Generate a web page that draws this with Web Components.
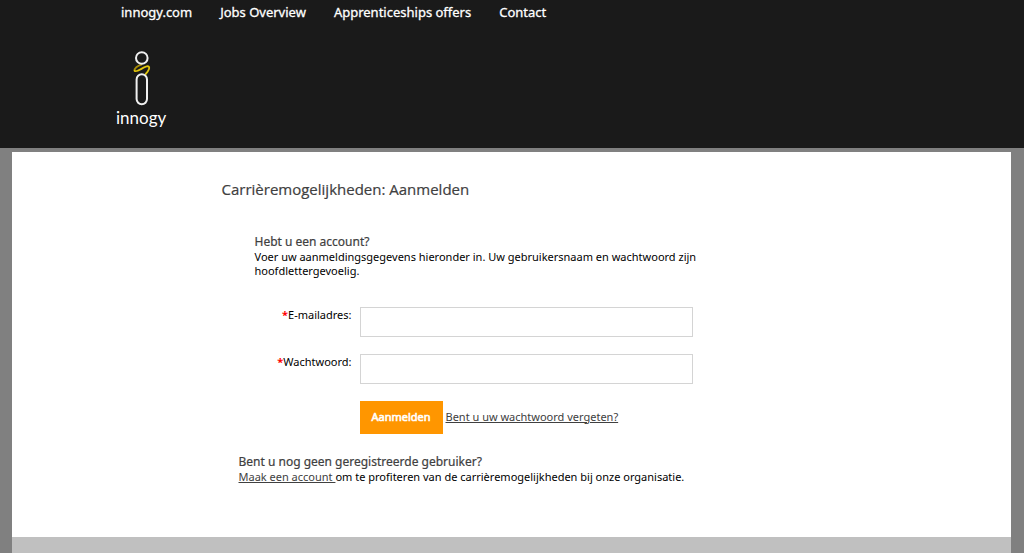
<!DOCTYPE html>
<html lang="nl">
<head>
<meta charset="utf-8">
<title>Carrièremogelijkheden: Aanmelden</title>
<style>
html { min-height: 100%; background: #808080; }
body { margin: 0; font: 11px/14px "Noto Sans", "Open Sans", sans-serif; color: #000; }
</style>
</head>
<body>
<career-page></career-page>
<script>
const define = (name, html) => customElements.define(name, class extends HTMLElement {
  constructor() {
    super();
    const t = document.createElement('template');
    t.innerHTML = html;
    this.attachShadow({ mode: 'open' }).append(t.content.cloneNode(true));
  }
});

define('brand-logo', `
<style>
:host { display: block; }
a { display: inline-flex; flex-direction: column; align-items: center; color: #fff; text-decoration: none; font: 17px/20px Lato, sans-serif; }
svg { display: block; }
</style>
<a href="#">
  <svg width="20" height="58" viewBox="0 0 20 58" fill="none" stroke-linecap="round" aria-hidden="true">
    <path d="M10.5 14.6C6.5 15.8 2.9 18.5 3.6 20.8" stroke="#a58b08" stroke-width="1.8"/>
    <path d="M3.6 20.8C5.5 23.2 13 16.2 16.7 16.2C19.7 16.6 17.8 20.9 14.7 24" stroke="#e2c60d" stroke-width="1.8"/>
    <circle cx="10.8" cy="8" r="5.8" stroke="#f0f0f0" stroke-width="2"/>
    <rect x="5.6" y="24.2" width="10.4" height="30" rx="5.2" stroke="#f0f0f0" stroke-width="2"/>
  </svg>
  <span>innogy</span>
</a>`);

define('site-header', `
<style>
:host { display: block; background: #1a1a1a; }
.inner { box-sizing: border-box; max-width: 800px; min-height: 148px; margin: 0 auto; padding: 0 4px; }
nav { display: flex; gap: 28px; padding: 2px 5px 0; }
nav a { color: #fff; text-decoration: none; font-size: 13px; line-height: 20px; -webkit-text-stroke: .3px; }
brand-logo { margin-top: 28px; }
</style>
<header class="inner">
  <nav><a href="#">innogy.com</a><a href="#">Jobs Overview</a><a href="#">Apprenticeships offers</a><a href="#">Contact</a></nav>
  <brand-logo></brand-logo>
</header>`);

define('login-form', `
<style>
:host { display: block; }
form { display: grid; grid-template-columns: 97px minmax(0, 333px); column-gap: 8px; row-gap: 17px; }
label { text-align: right; padding-top: 1px; }
label span { color: #f00; font-weight: 700; }
input { box-sizing: border-box; width: 100%; height: 30px; border: 1px solid #d4d4d4; margin: 0; padding: 0 8px; font: inherit; }
.actions { grid-column: 2; display: flex; align-items: center; gap: 3px; }
button { height: 33px; width: 83px; border: 0; padding: 0 0 2px; background: #ff9600; color: #fff; font: inherit; -webkit-text-stroke: .6px; }
a { color: #404040; padding-bottom: 2px; }
</style>
<form>
  <label for="mail"><span>*</span>E-mailadres:</label><input id="mail" type="email">
  <label for="pass"><span>*</span>Wachtwoord:</label><input id="pass" type="password">
  <div class="actions"><button type="button">Aanmelden</button><a href="#">Bent u uw wachtwoord vergeten?</a></div>
</form>`);

define('text-block', `
<style>
:host { display: block; }
h2 { margin: 0; font-size: 12px; line-height: 16px; font-weight: 400; color: #404040; -webkit-text-stroke: .2px; }
p { margin: 0; }
</style>
<h2><slot name="title"></slot></h2>
<p><slot></slot></p>`);

define('career-page', `
<style>
:host { display: block; }
.panel { margin: 4px 13px 0 12px; background: #fff; }
main { max-width: 580px; margin: 0 auto; padding: 27px 0 53px; }
h1 { margin: 0 0 35px; font: 400 15px/20px "Open Sans", sans-serif; color: #404040; -webkit-text-stroke: .2px; }
.account { margin: 0 90px 0 33px; }
login-form { margin: 29px 0 20px 33px; }
.register { margin-left: 17px; }
a { color: #404040; white-space: pre; }
footer { height: 16px; background: #c0c0c0; }
</style>
<site-header></site-header>
<div class="panel">
  <main>
    <h1>Carrièremogelijkheden: Aanmelden</h1>
    <text-block class="account"><span slot="title">Hebt u een account?</span>Voer uw aanmeldingsgegevens hieronder in. Uw gebruikersnaam en wachtwoord zijn hoofdlettergevoelig.</text-block>
    <login-form></login-form>
    <text-block class="register"><span slot="title">Bent u nog geen geregistreerde gebruiker?</span><a href="#">Maak een account </a>om te profiteren van de carrièremogelijkheden bij onze organisatie.</text-block>
  </main>
  <footer></footer>
</div>`);
</script>
</body>
</html>
